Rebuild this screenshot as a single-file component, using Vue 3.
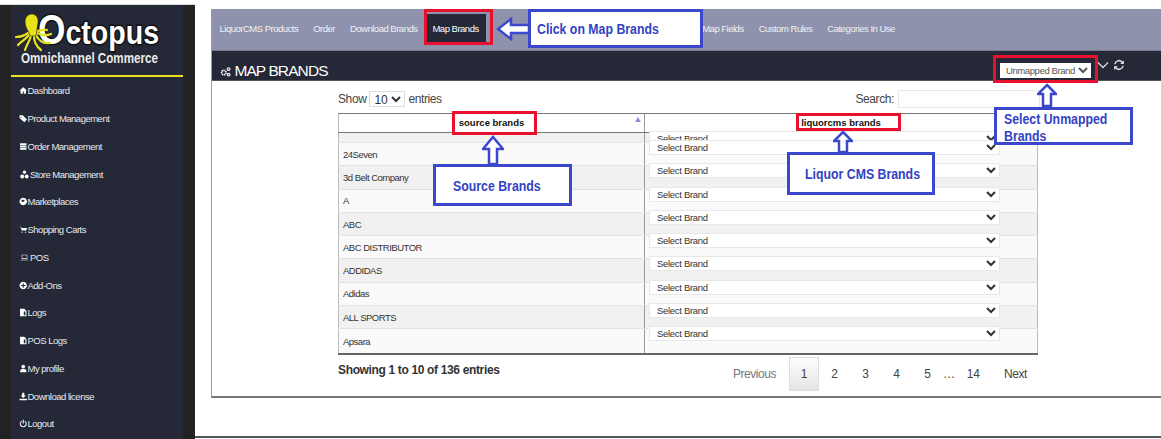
<script setup>
const menu = [
  { label: 'Dashboard', icon: 'M8 2 1 8h2v6h4v-4h2v4h4V8h2z' },
  { label: 'Product Management', icon: 'M1 2h6l8 8-5 5-9-8zM4 4.500a1 1 0 1 0 .1 0z' },
  { label: 'Order Management', icon: 'M2 2h12v3H2zM2 6h12v3H2zM2 10h12v4H2z' },
  { label: 'Store Management', icon: 'M8 1a3 3 0 1 1-.1 0zM4 8a3.500 3.500 0 1 1-.1 0zM12 8a3.500 3.500 0 1 1-.1 0z', wide: true },
  { label: 'Marketplaces', icon: 'M8 1a7 7 0 1 1-.1 0zM6 4 4 8l4 1 3-3z' },
  { label: 'Shopping Carts', icon: 'M0 3h3l2 7h9l1-5H5V4M5 12h2v2H5zM11 12h2v2h-2z' },
  { label: 'POS', icon: 'M3 3h10v7H3zM4 4v5h8V4zM1 12h14v1H1z', wide: true },
  { label: 'Add-Ons', icon: 'M8 1a7 7 0 1 1-.1 0zM7 4v3H4v2h3v3h2V9h3V7H9V4z' },
  { label: 'Logs', icon: 'M2 1h8l4 4v10H2zM9 6h3v7H9z' },
  { label: 'POS Logs', icon: 'M2 1h8l4 4v10H2zM9 6h3v7H9z' },
  { label: 'My profile', icon: 'M8 1a3.500 3.500 0 1 1-.1 0zM2 15c0-5 2-6 6-6s6 1 6 6z' },
  { label: 'Download license', icon: 'M6 1h4v5h3L8 11 3 6h3zM1 12h14v3H1z' },
  { label: 'Logout', icon: 'M7 1h2v7H7zM4.500 3.200l1.200 1.500a4.500 4.500 0 1 0 4.600 0l1.200-1.500a6.500 6.500 0 1 1-7 0z' },
]
const tabs = ['LiquorCMS Products', 'Order', 'Download Brands', 'Map Brands']
const tabsRight = ['Map Fields', 'Custom Rules', 'Categories In Use']
const brands = ['24Seven', '3d Belt Company', 'A', 'ABC', 'ABC DISTRIBUTOR', 'ADDIDAS', 'Adidas', 'ALL SPORTS', 'Apsara']
const pages = ['2', '3', '4', '5']
</script>

<template>
  <div class="page">
    <aside class="side">
      <div class="panel">
        <div class="logo">
          <svg class="squid" viewBox="0 0 40 40" width="40" height="40">
            <g fill="none" stroke="#e8e21a" stroke-width="2.200" stroke-linecap="round">
              <path d="M13 19C9 22 6 23 1 23" />
              <path d="M14 21C10 26 6 27 3 31" />
              <path d="M16 22C14 28 12 30 10 36" />
              <path d="M19 22C19 28 22 33 26 36" />
              <path d="M21 21C24 27 29 30 35 29" />
              <path d="M22 19C26 21 31 22 36 20" />
              <path d="M21 17C25 17 29 15 32 16" />
            </g>
            <path d="M10 8C10 2 14 0 17 0s7 3 6 9c-1 4-1 9-2 13h-6C14 17 10 14 10 8z" fill="#e8e21a" stroke="#1d1d12" stroke-width=".6" />
          </svg>
          <div class="word"><span class="big">O</span>ctopus</div>
          <div class="tag">Omnichannel Commerce</div>
        </div>
        <nav class="menu">
          <a v-for="m in menu" :key="m.label" class="item">
            <svg viewBox="0 0 16 16" class="ico" :class="{ wide: m.wide }"><path :d="m.icon" fill="#fff" fill-rule="evenodd" /></svg>{{ m.label }}
          </a>
        </nav>
      </div>
    </aside>

    <main class="main">
      <div class="frame">
        <nav class="tabs">
          <a v-for="t in tabs" :key="t" class="tab" :class="{ on: t === 'Map Brands' }">{{ t }}</a>
          <span class="tabgap"></span>
          <a v-for="t in tabsRight" :key="t" class="tab">{{ t }}</a>
        </nav>
        <header class="head">
          <h1 class="title">
            <svg viewBox="0 0 16 16" width="11" height="11" class="cog">
              <circle cx="5.500" cy="9.500" r="3.200" fill="none" stroke="#fff" stroke-width="2.400" stroke-dasharray="1.800 .8" />
              <circle cx="12.500" cy="4.500" r="2" fill="none" stroke="#fff" stroke-width="1.600" />
              <circle cx="12.500" cy="12.500" r="2" fill="none" stroke="#fff" stroke-width="1.600" />
            </svg>
            MAP BRANDS
          </h1>
          <div class="tools">
            <select class="filter"><option>Unmapped Brands</option></select>
            <svg viewBox="0 0 12 12" width="12" height="12"><path d="M1 3.500 6 8.500 11 3.500" fill="none" stroke="#ddd" stroke-width="1.300" /></svg>
            <svg viewBox="0 0 16 16" width="12" height="12"><path d="M2.500 7A5.500 5.500 0 0 1 12 4l1.500 1.500M13.500 9A5.500 5.500 0 0 1 4 12l-1.500-1.500" fill="none" stroke="#ddd" stroke-width="2" /><path d="M14.500 1.500v5h-5zM1.500 14.500v-5h5z" fill="#ddd" /></svg>
          </div>
        </header>

        <section class="body">
          <div class="controls">
            <label class="len">Show <select class="lensel"><option>10</option></select> entries</label>
            <label class="search">Search: <input class="input" type="text" /></label>
          </div>
          <div class="table">
            <div class="row headrow">
              <div class="cell c1 th">source brands<i class="sort"></i></div>
              <div class="cell c2 th">liquorcms brands</div>
            </div>
            <div class="row strip">
              <div class="cell c1"></div>
              <div class="cell c2"><select class="brand first"><option>Select Brand</option></select></div>
            </div>
            <div v-for="(b, i) in brands" :key="b" class="row" :class="{ alt: i % 2 === 1 }">
              <div class="cell c1 name">{{ b }}</div>
              <div class="cell c2"><select class="brand"><option>Select Brand</option></select></div>
            </div>
          </div>
          <div class="foot">
            <div class="info">Showing 1 to 10 of 136 entries</div>
            <div class="pager">
              <span class="pg prev">Previous</span>
              <span class="pg cur">1</span>
              <span v-for="p in pages" :key="p" class="pg">{{ p }}</span>
              <span class="dots">…</span>
              <span class="pg">14</span>
              <span class="pg next">Next</span>
            </div>
          </div>
        </section>
      </div>
      <div class="rest"></div>
    </main>

    <!-- tutorial annotations laid over the page -->
    <div class="note red r-tab"></div>
    <div class="note red r-filter"></div>
    <div class="note red r-source"></div>
    <div class="note red r-liquor"></div>
    <div class="note blue b-click"><span class="narrow">Click on Map Brands</span></div>
    <div class="note blue b-source"><span class="narrow">Source Brands</span></div>
    <div class="note blue b-liquor"><span class="narrow">Liquor CMS Brands</span></div>
    <div class="note blue b-unmapped"><span class="narrow">Select Unmapped</span><br /><span class="narrow">Brands</span></div>

    <svg class="arrow a-left" viewBox="0 0 33 24" width="33" height="24"><path d="M2 12 15 2v6h18v8H15v6z" fill="#fff" stroke="#3b48cc" stroke-width="2.500" /></svg>
    <svg class="arrow a-source" viewBox="0 0 22 30" width="22" height="30"><path d="M11 2 21 14h-6v15H7V14H1z" fill="#fff" stroke="#3b48cc" stroke-width="2.500" /></svg>
    <svg class="arrow a-liquor" viewBox="0 0 20 23" width="20" height="23"><path d="M10 2 19 11h-5v11H6V11H1z" fill="#fff" stroke="#3b48cc" stroke-width="2.500" /></svg>
    <svg class="arrow a-unmapped" viewBox="0 0 20 24" width="20" height="24"><path d="M10 2 19 11h-5v12H6V11H1z" fill="#fff" stroke="#3b48cc" stroke-width="2.500" /></svg>
  </div>
</template>

<style scoped>
.page {
  position: relative;
  display: flex;
  width: 1161px;
  height: 439px;
  overflow: hidden;
  background: #fff;
  font-family: "Liberation Sans", Arial, sans-serif;
  color: #333;
}
.side {
  flex: 0 0 195px;
  margin-top: 4px;
  padding: 0 12px 0 11px;
  box-sizing: border-box;
  background: #222;
  border-top: 1px solid #ddd;
}
.panel {
  height: 100%;
  background: #252836;
}
.logo {
  position: relative;
  height: 70px;
  border-bottom: 2px solid #ece01c;
}
.squid {
  position: absolute;
  left: 4px;
  top: 9px;
  z-index: 2;
}
.word {
  position: absolute;
  left: 27px;
  top: 5px;
  color: #fff;
  font-weight: 700;
  font-size: 34px;
  line-height: 40px;
  white-space: nowrap;
  -webkit-text-stroke: 3px #111;
  paint-order: stroke fill;
  transform: scaleX(.84);
  transform-origin: left center;
}
.big {
  font-size: 42px;
}
.tag {
  position: absolute;
  left: 10px;
  top: 45px;
  color: #ececec;
  font-weight: 700;
  font-size: 14px;
  line-height: 16px;
  white-space: nowrap;
  transform: scaleX(.83);
  transform-origin: left center;
}
.menu {
  display: flex;
  flex-direction: column;
}
.item {
  display: flex;
  align-items: center;
  height: 27.75px;
  padding-left: 8px;
  color: #e9e9ee;
  font-size: 9.500px;
  letter-spacing: -.5px;
  white-space: nowrap;
}
.ico {
  flex: none;
  width: 8.500px;
  height: 9px;
}
.ico.wide {
  width: 11px;
}
.main {
  flex: 1;
  min-width: 0;
  display: flex;
  flex-direction: column;
  padding: 9px 0 0 16px;
}
.frame {
  flex: 0 0 389px;
  box-sizing: border-box;
  border-left: 1px solid #9a9a9a;
  border-bottom: 2px solid #777;
  display: flex;
  flex-direction: column;
}
.rest {
  flex: 0 0 40px;
  box-sizing: border-box;
  border-bottom: 2px solid #555;
  margin-left: -16px;
}
.tabs {
  flex: 0 0 42px;
  box-sizing: border-box;
  display: flex;
  align-items: center;
  padding: 0 0 3px 0;
  background: #8e92ad;
  border-bottom: 1px solid #777a90;
}
.tab {
  padding: 0 7.500px;
  color: #f1f1f4;
  font-size: 9.500px;
  letter-spacing: -.5px;
  line-height: 29px;
  white-space: nowrap;
}
.tab.on {
  background: #252836;
  color: #fff;
}
.tabgap {
  width: 208.500px;
}
.head {
  flex: 0 0 30px;
  box-sizing: border-box;
  display: flex;
  align-items: stretch;
  justify-content: space-between;
  background: #252836;
  border-bottom: 1px solid #555;
}
.title {
  align-self: flex-end;
  margin: 0 0 0 8px;
  color: #fff;
  font-size: 15.500px;
  line-height: 18px;
  font-weight: 400;
  letter-spacing: -.9px;
}
.cog {
  vertical-align: -1px;
}
.tools {
  display: flex;
  align-items: flex-start;
  gap: 4px;
  margin-right: 36px;
}
.tools svg {
  margin-top: 8px;
}
.filter {
  width: 91px;
  height: 15px;
  margin: 12px 2px 0 0;
  padding: 0 0 0 2px;
  box-sizing: border-box;
  border: 0;
  background: #fff;
  color: #555;
  font: 9.500px "Liberation Sans", Arial, sans-serif;
  letter-spacing: -.4px;
}
.body {
  flex: 1;
  min-height: 0;
  padding: 9px 0 0 126px;
  background: #fff;
}
.controls {
  width: 702px;
  height: 23px;
  display: flex;
  justify-content: space-between;
  font-size: 12px;
  color: #444;
  letter-spacing: -.4px;
}
.len,
.search {
  display: flex;
  align-items: center;
  gap: 2px;
  height: 18px;
}
.lensel {
  width: 36px;
  height: 16px;
  margin: 0 1px;
  box-sizing: border-box;
  border: 1px solid #ddd;
  background: #fff;
  color: #333;
  font: 12px "Liberation Sans", Arial, sans-serif;
}
.input {
  width: 142px;
  height: 18px;
  margin-left: 2px;
  box-sizing: border-box;
  border: 1px solid #e6e6e6;
}
.table {
  width: 700px;
  border-top: 1px solid #777;
  border-bottom: 2px solid #666;
  background: #fff;
}
.row {
  display: grid;
  grid-template-columns: 307px 393px;
  height: 23.300px;
  border-bottom: 1px solid #e2e2e2;
  box-sizing: border-box;
  background: #fafafa;
}
.row:last-child {
  border-bottom: 0;
}
.row.alt {
  background: #f1f1f1;
}
.row.headrow {
  height: 19px;
  background: #fff;
  border-bottom: 1px solid #777;
}
.row.strip {
  height: 10px;
  background: #f1f1f1;
}
.cell {
  position: relative;
  min-width: 0;
}
.c1 {
  border-left: 1px solid #bbb;
  border-right: 1px solid #999;
}
.c2 {
  border-right: 1px solid #bbb;
}
.th {
  text-align: center;
  color: #111;
  font-size: 9.500px;
  font-weight: 700;
  line-height: 18px;
}
.sort {
  position: absolute;
  right: 3px;
  top: 3px;
  border: 3px solid transparent;
  border-top: 0;
  border-bottom: 5px solid #8c8fd4;
}
.name {
  display: flex;
  align-items: center;
  padding-left: 4px;
  color: #333;
  font-size: 9.500px;
  letter-spacing: -.5px;
}
.brand {
  position: absolute;
  left: 4px;
  top: -3px;
  width: 351px;
  height: 15px;
  box-sizing: border-box;
  padding: 0 0 0 3px;
  border: 1px solid #e8e8e8;
  background: #fff;
  color: #333;
  font: 9.500px "Liberation Sans", Arial, sans-serif;
  letter-spacing: -.3px;
}
.brand.first {
  top: -2px;
}
.foot {
  width: 700px;
  display: flex;
  justify-content: space-between;
  padding-top: 3px;
}
.info {
  margin-top: 3px;
  color: #333;
  font-size: 12px;
  font-weight: 700;
  line-height: 18px;
  letter-spacing: -.35px;
}
.pager {
  display: flex;
  align-items: center;
  height: 32px;
  color: #444;
  font-size: 12px;
  letter-spacing: -.2px;
}
.pg {
  padding: 0 12.250px;
  line-height: 32px;
}
.prev {
  padding: 0 11px;
  margin-right: 2px;
  color: #777;
  letter-spacing: -.45px;
}
.cur {
  width: 30px;
  box-sizing: border-box;
  padding: 0;
  text-align: center;
  background: linear-gradient(#fdfdfd, #e4e4e4);
  border: 1px solid #ddd;
}
.dots {
  width: 11.500px;
  text-align: center;
}
.next {
  padding: 0 11px 0 12px;
  letter-spacing: -.4px;
}
.note {
  position: absolute;
  box-sizing: border-box;
}
.red {
  border: 3px solid #e8112d;
}
.blue {
  border: 3px solid #3b48cc;
  background: #fff;
  color: #3242c4;
  font-weight: 700;
  font-size: 14px;
  white-space: nowrap;
}
.narrow {
  display: inline-block;
  transform: scaleX(.88);
  transform-origin: left center;
}
.r-tab { left: 424px; top: 9px; width: 69px; height: 36px; }
.r-filter { left: 993px; top: 55px; width: 105px; height: 28px; }
.r-source { left: 452px; top: 111px; width: 85px; height: 24px; }
.r-liquor { left: 796px; top: 113px; width: 105px; height: 18px; }
.b-click {
  left: 528px;
  top: 9px;
  width: 175px;
  height: 39px;
  padding: 8px 0 0 6px;
  line-height: 18px;
}
.b-source {
  left: 433px;
  top: 164px;
  width: 139px;
  height: 42px;
  padding: 10px 0 0 17px;
  line-height: 18px;
}
.b-liquor {
  left: 787px;
  top: 152px;
  width: 148px;
  height: 43px;
  padding: 10px 0 0 15px;
  line-height: 18px;
}
.b-unmapped {
  left: 994px;
  top: 107px;
  width: 139px;
  height: 38px;
  padding: 1px 0 0 7px;
  line-height: 17px;
}
.arrow {
  position: absolute;
  display: block;
}
.a-left { left: 496px; top: 17px; }
.a-source { left: 482px; top: 135px; }
.a-liquor { left: 833px; top: 130px; }
.a-unmapped { left: 1037px; top: 83px; }
</style>

<style>
html, body { margin: 0; background: #fff; overflow: hidden; }
</style>
